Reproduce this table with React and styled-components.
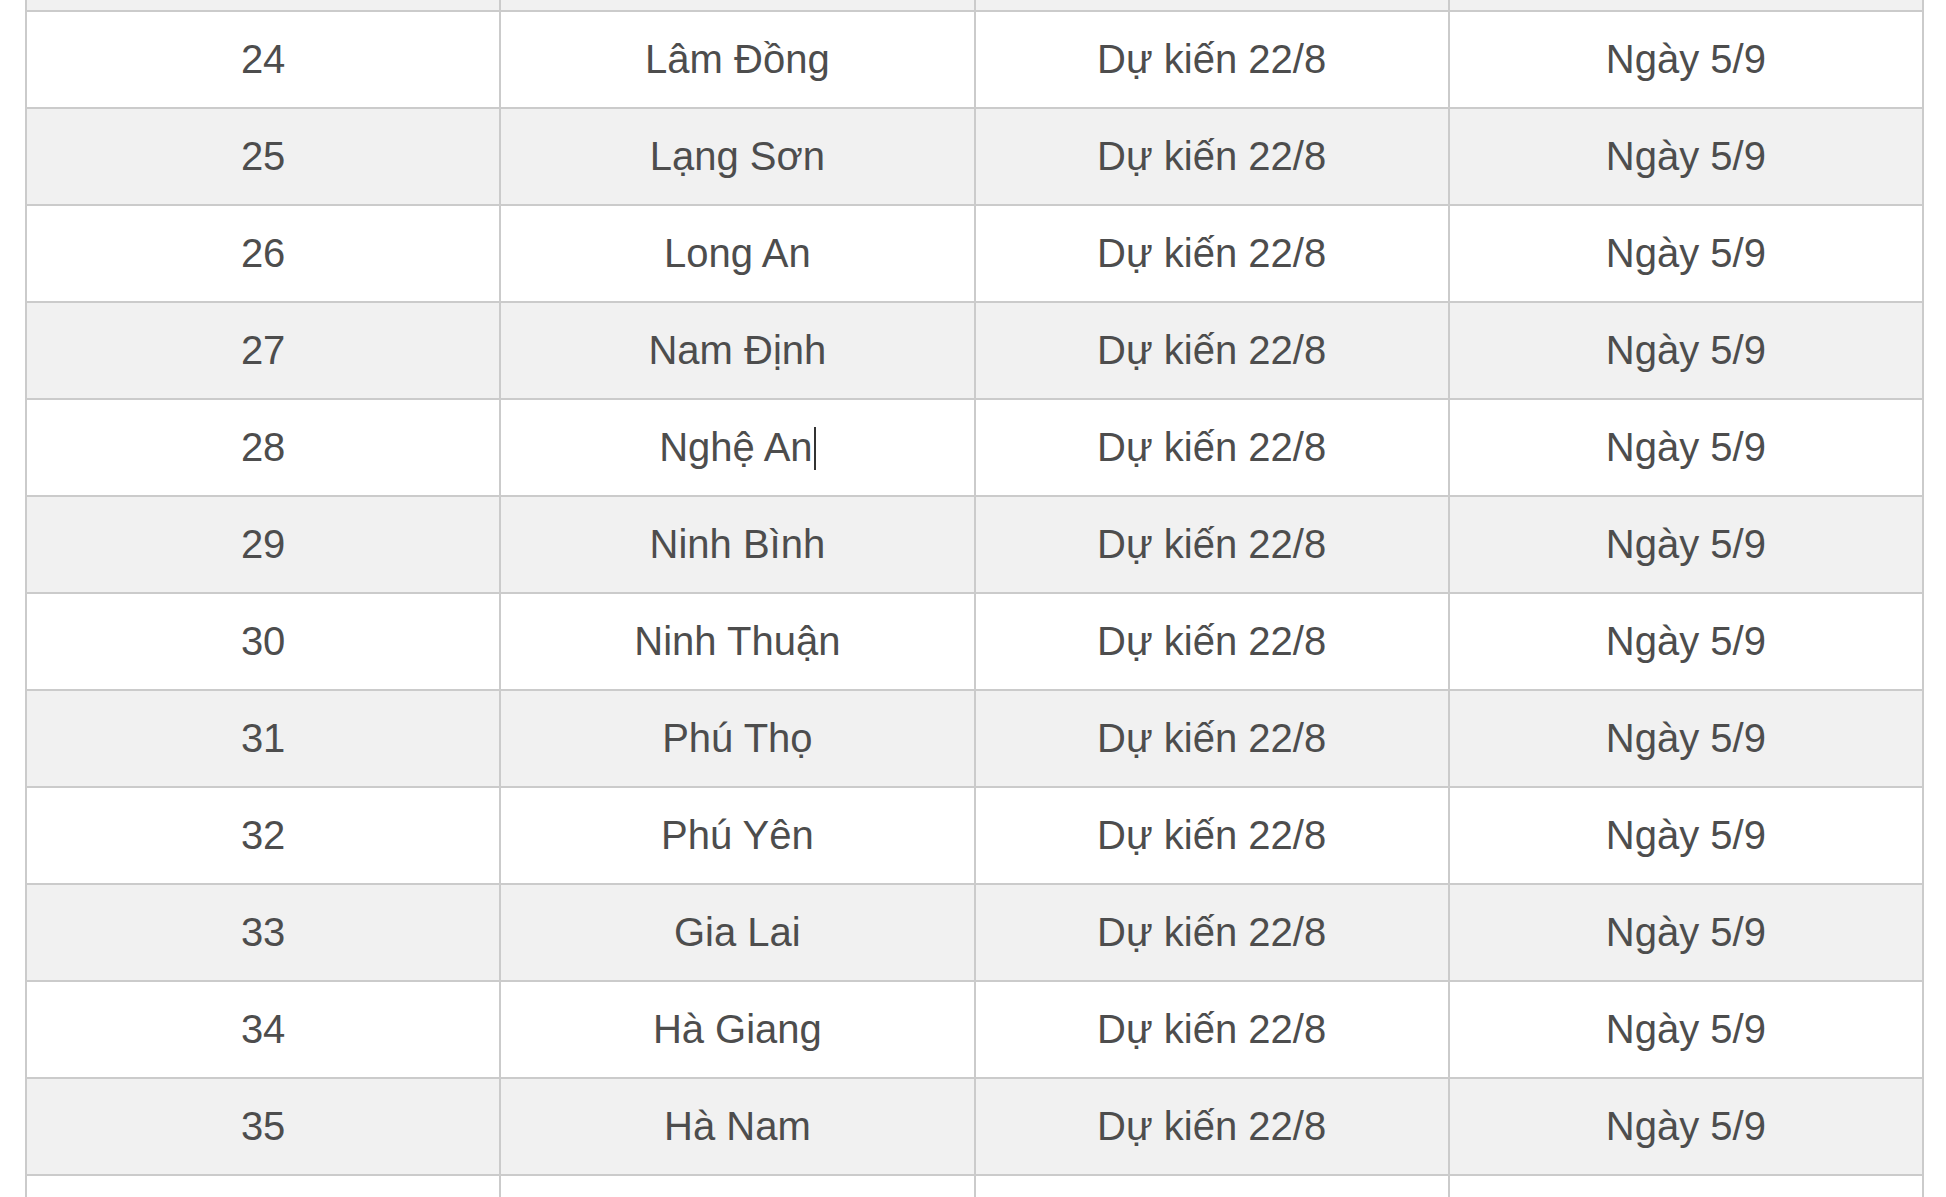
import React from 'react';
import styled, { createGlobalStyle } from 'styled-components';

const GlobalStyle = createGlobalStyle`
    html, body {
        margin: 0;
        padding: 0;
        background: #fff;
        overflow: hidden;
    }
`;

const Page = styled.div`
    height: 1197px;
    overflow: hidden;
    padding-left: 25px;
`;

const Table = styled.table`
    width: 1899px;
    margin-top: -87px;
    border-collapse: collapse;
    table-layout: fixed;
    font-family: "Liberation Sans", Arial, sans-serif;
    font-size: 40px;
    color: #4d4d4d;
`;

const Row = styled.tr`
    background: ${props => props.$striped ? '#f1f1f1' : '#fff'};
`;

const Cell = styled.td`
    border: 2px solid #cbcbcb;
    padding: 0;
    height: 95px;
    line-height: 95px;
    text-align: center;
    white-space: nowrap;
`;

const Caret = styled.span`
    display: inline-block;
    width: 2px;
    height: 43px;
    margin-left: 1px;
    background: #333;
    vertical-align: -9px;
`;

// rows 23 and 36 are only partly scrolled into view, their text is out of frame
const rows = [
    { no: 23, partial: true },
    { no: 24, name: 'Lâm Đồng' },
    { no: 25, name: 'Lạng Sơn' },
    { no: 26, name: 'Long An' },
    { no: 27, name: 'Nam Định' },
    { no: 28, name: 'Nghệ An', caret: true },
    { no: 29, name: 'Ninh Bình' },
    { no: 30, name: 'Ninh Thuận' },
    { no: 31, name: 'Phú Thọ' },
    { no: 32, name: 'Phú Yên' },
    { no: 33, name: 'Gia Lai' },
    { no: 34, name: 'Hà Giang' },
    { no: 35, name: 'Hà Nam' },
    { no: 36, partial: true },
];

function App() {
    return (
        <>
            <GlobalStyle />
            <Page>
                <Table>
                    <tbody>
                        {
                            rows.map(row => (
                                row.partial
                                ? <Row key={row.no} $striped={row.no % 2 === 1}>
                                    <Cell />
                                    <Cell />
                                    <Cell />
                                    <Cell />
                                </Row>
                                : <Row key={row.no} $striped={row.no % 2 === 1}>
                                    <Cell>{row.no}</Cell>
                                    <Cell>
                                        {row.name}
                                        {row.caret && <Caret />}
                                    </Cell>
                                    <Cell>Dự kiến 22/8</Cell>
                                    <Cell>Ngày 5/9</Cell>
                                </Row>
                            ))
                        }
                    </tbody>
                </Table>
            </Page>
        </>
    );
}

export default App;
